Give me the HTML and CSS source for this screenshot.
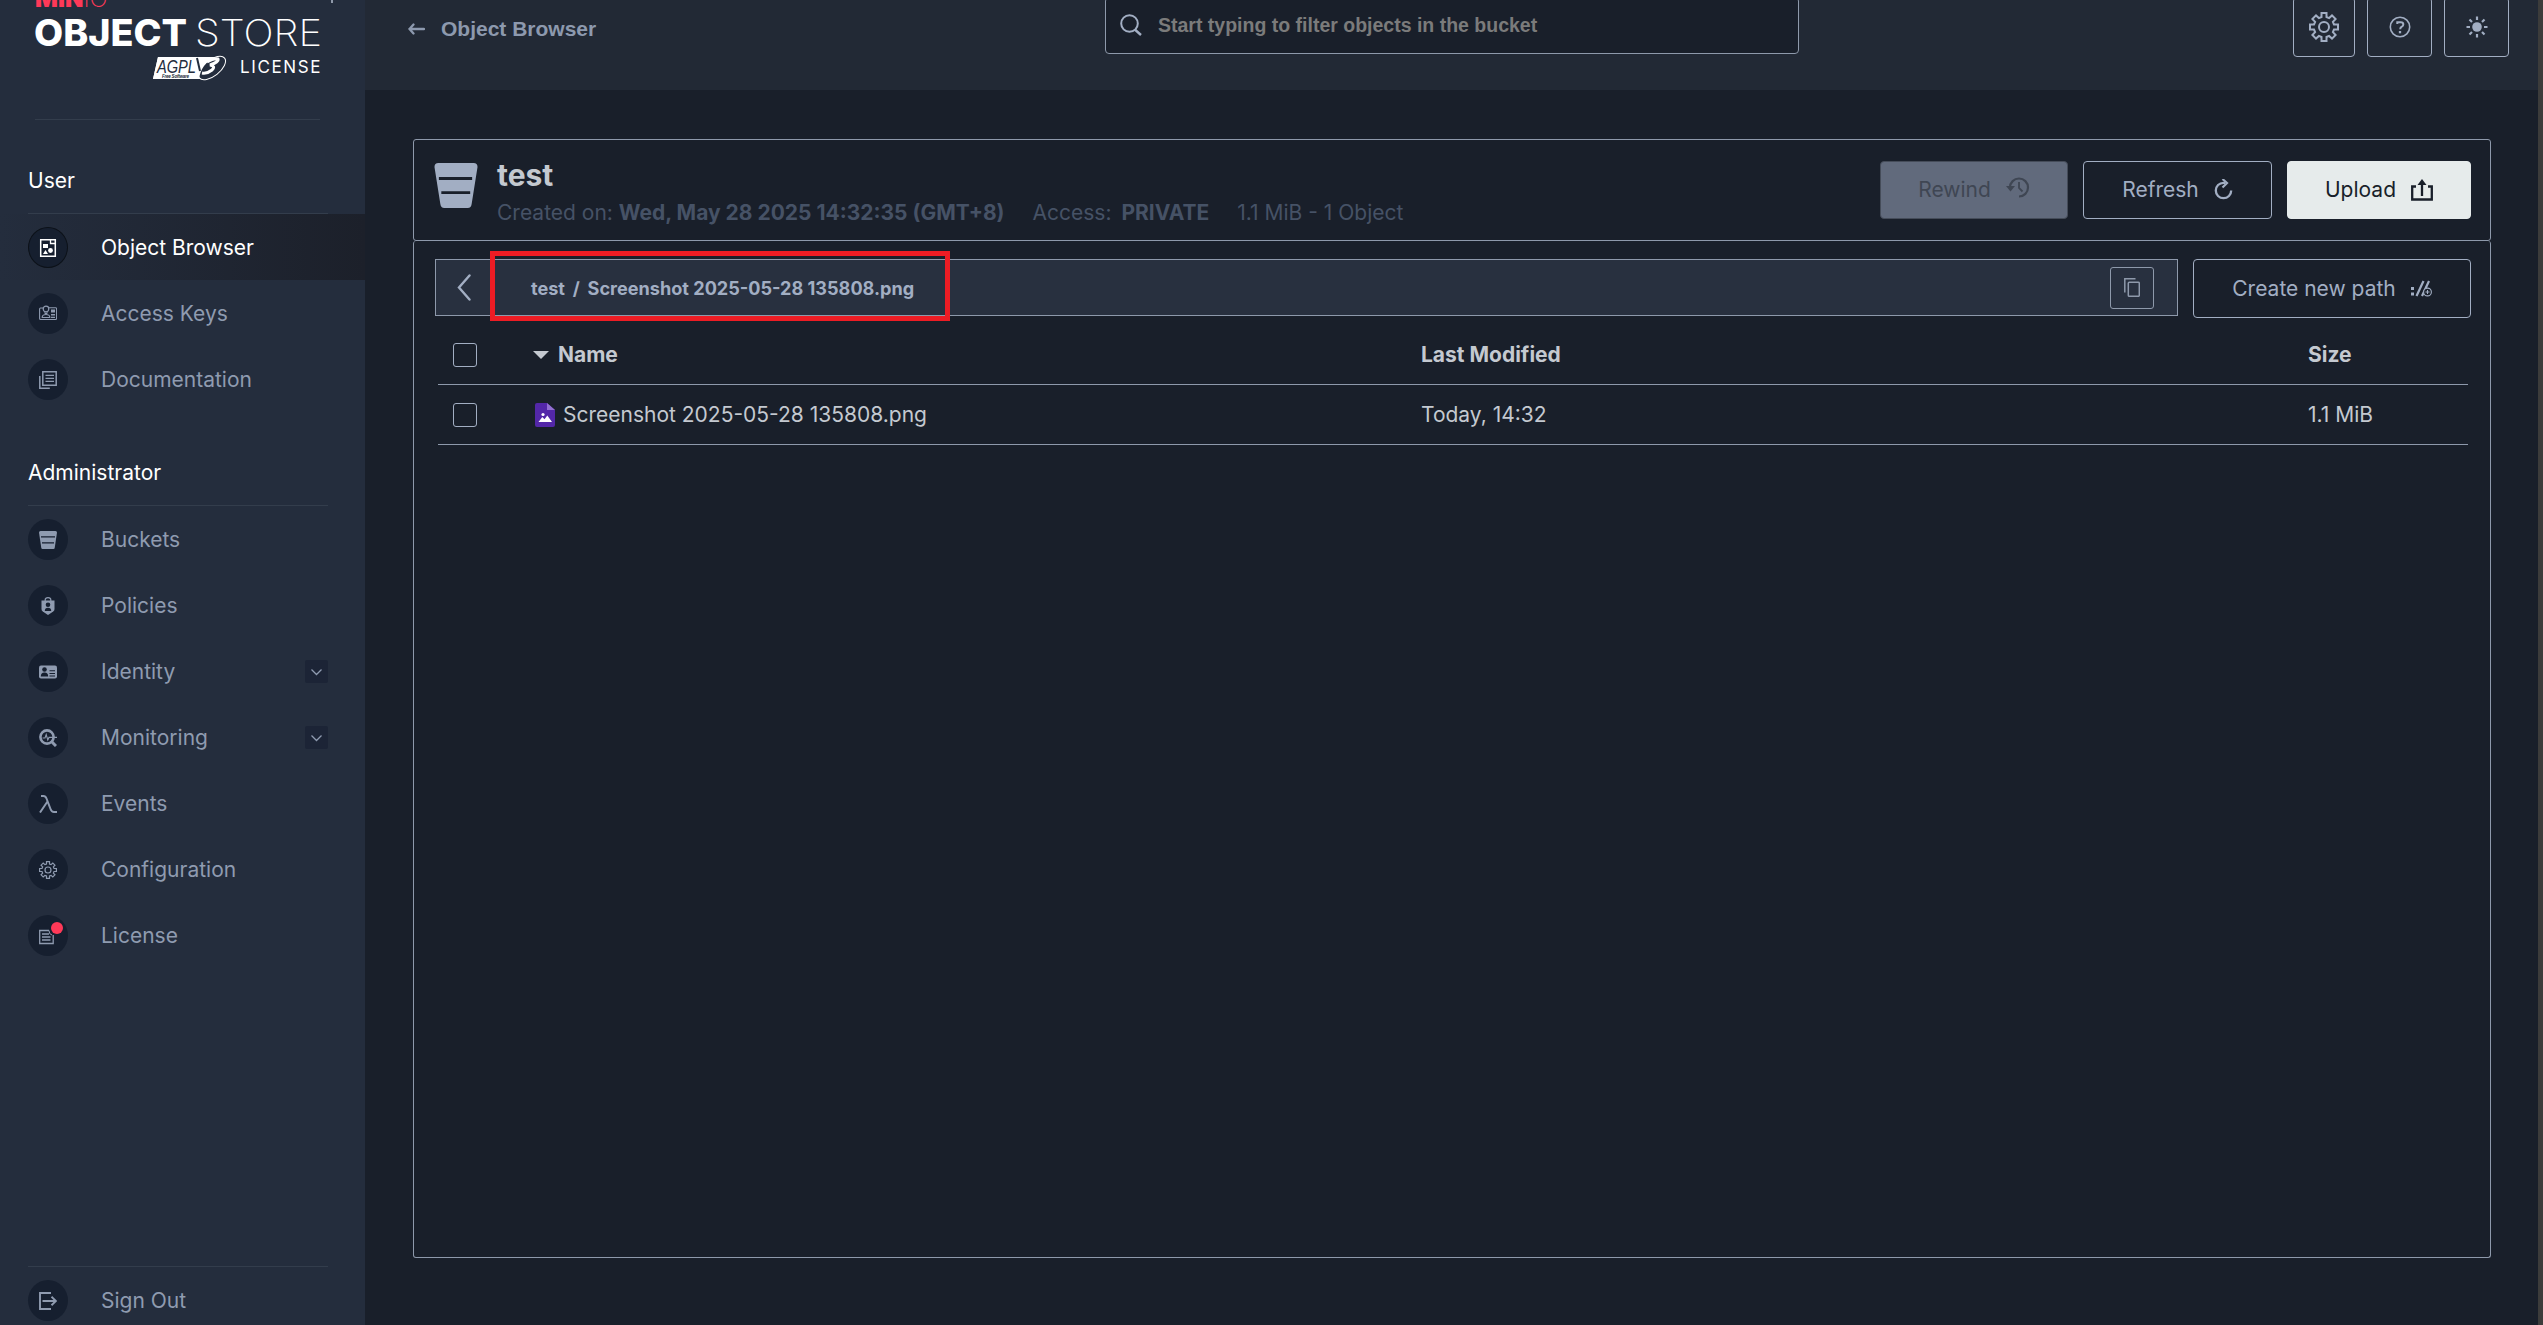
FILE: index.html
```
<!DOCTYPE html>
<html lang="en">
<head>
    <meta charset="UTF-8">
    <meta name="viewport" content="width=device-width, initial-scale=1.0">
    <title>MinIO Console</title>
    <link rel="stylesheet" href="styles.css">
</head>
<body>
    <div class="app">
        <aside class="sidebar">
            <div class="logo">
                <div class="logo-brand"><b>MIN</b>IO</div>
                <svg class="logo-name" width="285" height="30">
                    <text class="logo-bold" x="-1" y="28" textLength="153" lengthAdjust="spacingAndGlyphs">OBJECT</text>
                    <text class="logo-thin" x="160" y="28" textLength="127" lengthAdjust="spacingAndGlyphs">STORE</text>
                </svg>
                <div class="logo-license">
                    <svg width="74" height="26" viewBox="0 0 74 26">
                        <path d="M5 2H62L50 24H0Z" fill="#fff"/>
                        <ellipse cx="59" cy="13" rx="16" ry="8" transform="rotate(-38 59 13)" fill="#242d3d" stroke="#fff"/>
                        <path d="M5 2H62Q48 9 46 24H0Z" fill="#fff"/>
                        <text class="agpl" x="4" y="17.500" textLength="39" lengthAdjust="spacingAndGlyphs">AGPL</text>
                        <text class="agpl-sub" x="9" y="22.5" textLength="27">Free Software</text>
                        <path d="M44 3l3 13" stroke="#242d3d" stroke-width="2"/>
                        <path d="M54 7q7-4 11-3 1 3-8 6 6 1 2 5-5 4-10 3" fill="none" stroke="#fff" stroke-width="3"/>
                    </svg>
                    <span>LICENSE</span>
                </div>
                <span class="collapse"></span>
            </div>
            <nav class="menu">
                <h2>User</h2>
                <a class="item active">
                    <i><svg viewBox="0 0 18 18"><path d="M1.700.8h14.600v16.400H1.700z" fill="none" stroke="currentColor" stroke-width="1.500"/><path d="M11.500 1v3.500h4.500" fill="none" stroke="currentColor" stroke-width="1.300"/><path d="M4 5h5v4H4zM4 15l2.500-4L9 15z" fill="currentColor"/><circle cx="11.500" cy="11.500" r="2.400" fill="currentColor"/></svg></i>
                    Object Browser
                </a>
                <a class="item">
                    <i><svg viewBox="0 0 18 18"><path d="M4 3H1.500Q.6 3 .6 4v9.500q0 1 1 1h15q1 0 1-1V3.600q0-.8-1-.8H10" fill="none" stroke="currentColor" stroke-width="1.100"/><circle cx="7" cy="4" r="2.800" fill="none" stroke="currentColor" stroke-width="1.200"/><path d="M5.500 7.500L7 9l1.500-1.500M3.200 12.500q0-3 3.800-3t3.800 3z" fill="none" stroke="currentColor" stroke-width="1.200"/><path d="M12 4.500h4v3h-4zM12 9h4v1.400h-4zM12 11.700h4V13h-4z" fill="currentColor"/></svg></i>
                    Access Keys
                </a>
                <a class="item">
                    <i><svg viewBox="0 0 18 18"><path d="M3.800.8h13.400v13.400H3.800zM.8 5v12.200h10" fill="none" stroke="currentColor" stroke-width="1.500"/><path d="M6.500 4.300h8.500M6.500 7.300h8.500M6.500 10.300h8.500" stroke="currentColor" stroke-width="1.300"/></svg></i>
                    Documentation
                </a>
                <h2 class="admin">Administrator</h2>
                <a class="item">
                    <i><svg viewBox="0 0 18 18"><path d="M0 1.500Q0 0 1.500 0h15Q18 0 18 1.500L15.700 17q-.2 1-1.200 1h-11q-1 0-1.200-1z" fill="currentColor"/><path d="M2 5.800h14M3 11.800h12" stroke="#161f2f" stroke-width="1.300"/></svg></i>
                    Buckets
                </a>
                <a class="item">
                    <i><svg viewBox="0 0 18 18"><path d="M2.500 3.500h13V12q0 1.500-1.300 2.500L9 18l-5.200-3.500Q2.500 13.500 2.500 12z" fill="currentColor"/><path d="M6.200 4V2.700q0-2.100 2.800-2.100t2.800 2.100V4" fill="none" stroke="currentColor" stroke-width="1.200"/><circle cx="9" cy="7.700" r="2.300" fill="#161f2f"/><path d="M5.800 14q0-3.300 3.200-3.300t3.200 3.300z" fill="#161f2f"/></svg></i>
                    Policies
                </a>
                <a class="item">
                    <i><svg viewBox="0 0 18 18"><rect y="2.500" width="18" height="13" rx="2" fill="currentColor"/><circle cx="5.500" cy="6.500" r="2.300" fill="#161f2f"/><path d="M1.800 13.500q0-4 3.700-4t3.700 4zM10.500 7.200H16v1h-5.500zM10.500 10H16v1h-5.500zM10.500 12.600H16v1h-5.500z" fill="#161f2f"/></svg></i>
                    Identity
                    <svg class="chevron" viewBox="0 0 23 23"><path d="M6.500 9.500l5 5 5-5" fill="none" stroke="currentColor" stroke-width="1.300"/></svg>
                </a>
                <a class="item">
                    <i><svg viewBox="0 0 18 18"><circle cx="8" cy="8" r="6.600" fill="none" stroke="currentColor" stroke-width="2.600"/><path d="M12 12l5 5" stroke="currentColor" stroke-width="3"/><path d="M3.500 9H6l1.200-3.500L8.800 11l1.200-2.600H18" fill="none" stroke="currentColor" stroke-width="1.100"/></svg></i>
                    Monitoring
                    <svg class="chevron" viewBox="0 0 23 23"><path d="M6.500 9.500l5 5 5-5" fill="none" stroke="currentColor" stroke-width="1.300"/></svg>
                </a>
                <a class="item">
                    <i><svg viewBox="0 0 18 18"><path d="M2 1h2.500q2 0 3 2.500l4 10.500q1 3 3.500 3H18M8.500 6.500L1 17.500" fill="none" stroke="currentColor" stroke-width="2"/></svg></i>
                    Events
                </a>
                <a class="item">
                    <i><svg viewBox="0 0 30 30"><use href="#gear"/></svg></i>
                    Configuration
                </a>
                <a class="item">
                    <i><svg viewBox="0 0 18 18"><path d="M10 3.500H.7v13h13.500V8" fill="none" stroke="currentColor" stroke-width="1.300"/><path d="M3 7h7M3 10h8.500M3 13h8.500" stroke="currentColor" stroke-width="1.300"/><path d="M10 3.500q0 4 3 4.500" fill="none" stroke="currentColor"/></svg><em class="dot"></em></i>
                    License
                </a>
            </nav>
            <div class="menu signout">
                <a class="item">
                    <i><svg viewBox="0 0 18 18"><path d="M12 1H1v16h11M3.500 9H17M12.500 4.800L17 9l-4.500 4.200" fill="none" stroke="currentColor" stroke-width="1.900"/></svg></i>
                    Sign Out
                </a>
            </div>
        </aside>

        <div class="content">
            <header class="topbar">
                <a class="back">
                    <svg width="17" height="12" viewBox="0 0 17 12"><path d="M16 6H1.500M5.500 1.500L1.500 6l4 4.500" fill="none" stroke="currentColor" stroke-width="2.300" stroke-linecap="round"/></svg>
                    Object Browser
                </a>
                <div class="search">
                    <svg width="22" height="22" viewBox="0 0 22 22"><circle cx="9.500" cy="9.500" r="8.300" fill="none" stroke="currentColor" stroke-width="2"/><path d="M14.800 15.500L21 21" stroke="currentColor" stroke-width="2.400"/></svg>
                    <span>Start typing to filter objects in the bucket</span>
                </div>
                <div class="tools">
                    <button class="tool settings">
                        <svg width="30" height="30" viewBox="0 0 30 30">
                            <g id="gear" fill="none" stroke="currentColor" stroke-width="2">
                                <path d="M12.500 1h5v4l2.600 1.100L23 3.400 26.600 7l-2.700 2.900L25 12.500h4v5h-4l-1.100 2.600 2.700 2.900-3.600 3.600-2.900-2.700L17.500 25v4h-5v-4l-2.600-1.100L7 26.600 3.400 23l2.700-2.900L5 17.500H1v-5h4l1.100-2.600L3.400 7 7 3.400l2.900 2.700L12.500 5z"/>
                                <circle cx="15" cy="15" r="5"/>
                            </g>
                        </svg>
                    </button>
                    <button class="tool">
                        <svg width="22" height="22" viewBox="0 0 22 22" fill="none" stroke="currentColor"><circle cx="11" cy="11" r="9.700" stroke-width="1.600"/><path d="M8.300 8V6.300h3.500q2.500 0 2.500 2.200 0 1.500-1.500 2.200-1.600.6-1.600 2.600" stroke-width="2"/><path d="M11 15v2.300" stroke-width="2.300"/></svg>
                    </button>
                    <button class="tool">
                        <svg width="22" height="22" viewBox="0 0 22 22"><circle cx="11" cy="11" r="4.800" fill="currentColor"/><path d="M11 .5v3.500M11 18v3.500M.5 11H4M18 11h3.500M3.500 3.500L6 6M16 16l2.500 2.500M18.500 3.500L16 6M6 16l-2.500 2.500" stroke="currentColor" stroke-width="2.200"/></svg>
                    </button>
                </div>
            </header>

            <main class="panel">
                <section class="bucket-header">
                    <svg class="bucket-icon" width="44" height="45" viewBox="0 0 44 46"><path d="M0 4Q0 0 4 0h36q4 0 4 4l-6 38q-.5 4-4 4H10q-3.500 0-4-4z" fill="#a2aec3"/><path d="M4.500 15.800h34M7 30.300h29.500" stroke="#191f2a" stroke-width="3"/></svg>
                    <div class="bucket-info">
                        <h1>test</h1>
                        <p>
                            <span>Created on: <b>Wed, May 28 2025 14:32:35 (GMT+8)</b></span>
                            <span>Access: <b class="access">PRIVATE</b></span>
                            <span>1.1 MiB - 1 Object</span>
                        </p>
                    </div>
                    <div class="actions">
                        <button class="btn rewind">Rewind
                            <svg width="24" height="21" viewBox="0 0 24 21"><path d="M4 10.500a9 9 0 1 1 9 9" fill="none" stroke="currentColor" stroke-width="2.200"/><path d="M0 9h9l-4.500 5.500z" fill="currentColor"/><path d="M13 5v6l3.500 3.500" fill="none" stroke="currentColor" stroke-width="1.800"/></svg>
                        </button>
                        <button class="btn refresh">Refresh
                            <svg width="19" height="21" viewBox="0 0 19 21"><path d="M11 3.800H9.500a7.700 7.700 0 1 0 7.700 7.700" fill="none" stroke="currentColor" stroke-width="2.300"/><path d="M8.500 0l4.500 4-4.500 4.500" fill="none" stroke="currentColor" stroke-width="2.200"/></svg>
                        </button>
                        <button class="btn upload">Upload
                            <svg width="22" height="22" viewBox="0 0 22 22"><path d="M5 7.500H1.200v13h19.600v-13H17M11 17V3" fill="none" stroke="currentColor" stroke-width="2.300"/><path d="M6.500 6L11 0l4.500 6z" fill="currentColor"/></svg>
                        </button>
                    </div>
                </section>

                <section class="browser">
                    <div class="path-row">
                        <div class="breadcrumb">
                            <svg class="prev" width="14" height="27" viewBox="0 0 14 27"><path d="M12.500 1.500L2 13.500l10.500 12" fill="none" stroke="currentColor" stroke-width="2.400" stroke-linecap="round"/></svg>
                            <div class="crumbs">test <span>/</span> Screenshot 2025-05-28 135808.png</div>
                            <button class="copy">
                                <svg width="16" height="19" viewBox="0 0 16 19" fill="none" stroke="currentColor" stroke-width="1.500"><rect x="4.300" y="4.300" width="11" height="14" rx="1"/><path d="M.8 14.500V.8h10.700"/></svg>
                            </button>
                            <div class="highlight"></div>
                        </div>
                        <button class="btn new-path">Create new path
                            <svg width="21" height="17" viewBox="0 0 21 17"><path d="M0 7h3v3H0zM0 12.500h3v3H0z" fill="currentColor"/><path d="M5.500 16L12.500 1M11 16L18 1" stroke="currentColor" stroke-width="2.200"/><circle cx="16.500" cy="12" r="3.900" fill="#191f2a" stroke="currentColor" stroke-width="1.100"/><path d="M14.500 12h4M16.500 10v4" stroke="currentColor" stroke-width="1.100"/></svg>
                        </button>
                    </div>
                    <div class="table">
                        <div class="row head">
                            <span class="check"></span>
                            <span class="name"><span class="sort"></span>Name</span>
                            <span>Last Modified</span>
                            <span>Size</span>
                        </div>
                        <div class="row">
                            <span class="check"></span>
                            <span class="name">
                                <svg width="20" height="24" viewBox="0 0 20 24"><path d="M2 0h10l8 7v15q0 2-2 2H2q-2 0-2-2V2q0-2 2-2z" fill="#5327a8"/><path d="M12 0l8 7h-8z" fill="#9370d2"/><path d="M3.500 19l3.800-5 2.200 2.300 2.800-3.800 4.700 6.500z" fill="#fff"/><circle cx="8" cy="11.500" r="1.600" fill="#fff"/></svg>
                                Screenshot 2025-05-28 135808.png
                            </span>
                            <span>Today, 14:32</span>
                            <span>1.1 MiB</span>
                        </div>
                    </div>
                </section>
            </main>
        </div>
        <div class="edge"></div>
    </div>
</body>
</html>
```
FILE: styles.css
```
*{
    box-sizing: border-box;
}
body{
    margin: 0;
    background-color: #191f2a;
    color: #c4c9d0;
    font-family: Inter, "Liberation Sans", sans-serif;
    font-size: 21px;
    overflow: hidden;
}
button{
    font-family: inherit;
    font-size: 21px;
    background: none;
    padding: 0;
}
svg{
    flex-shrink: 0;
    display: block;
}
.app{
    display: flex;
    height: 1325px;
    overflow: hidden;
}

/* sidebar */
.sidebar{
    width: 365px;
    flex-shrink: 0;
    display: flex;
    flex-direction: column;
    background-color: #242d3d;
}
.logo{
    position: relative;
    height: 120px;
    margin: 0 45px 0 35px;
    border-bottom: 1px solid #333d4c;
}
.logo-brand{
    height: 18px;
    margin-top: -10px;
    font-size: 24px;
    line-height: 18px;
    color: #ff3958;
    font-weight: 200;
}
.logo-brand b{
    font-weight: 900;
}
.logo-name{
    margin-top: 10px;
    overflow: visible;
}
.logo-name text{
    font-family: Inter, sans-serif;
    font-size: 37px;
    fill: #fff;
}
.logo-name .logo-bold{
    font-weight: 800;
}
.logo-name .logo-thin{
    font-weight: 200;
}
.logo-license{
    display: flex;
    justify-content: flex-end;
    align-items: center;
    gap: 13px;
    margin-top: 7px;
    height: 26px;
    color: #fff;
    font-size: 17px;
    letter-spacing: 1.6px;
}
.logo-license span{
    margin: -2px -2px 0 0;
}
.agpl{
    font-family: "Liberation Sans", sans-serif;
    font-size: 19px;
    font-style: italic;
    letter-spacing: 0;
    fill: #242d3d;
}
.agpl-sub{
    font-family: "Liberation Sans", sans-serif;
    font-size: 4.5px;
    font-weight: bold;
    font-style: italic;
    letter-spacing: 0;
    fill: #242d3d;
}
.collapse{
    position: absolute;
    left: 296px;
    top: 0;
    width: 2px;
    height: 3px;
    background-color: #8f99aa;
}
.menu h2{
    height: 94px;
    margin: 0 37px 0 28px;
    padding-top: 47px;
    border-bottom: 1px solid #333d4c;
    color: #fff;
    font-size: 21px;
    line-height: 27px;
    font-weight: 400;
}
.item{
    display: flex;
    align-items: center;
    height: 66px;
    padding: 1px 37px 0 28px;
    color: #8f9bb0;
}
.item.active{
    color: #fff;
    background: linear-gradient(90deg, #242d3d, #1c202a);
}
.item i{
    position: relative;
    display: flex;
    align-items: center;
    justify-content: center;
    width: 40px;
    height: 41px;
    margin-right: 33px;
    border-radius: 50%;
    background-color: #161f2f;
}
.item.active i{
    border: 1px solid #0c1118;
}
.item i svg{
    width: 18px;
    height: 18px;
}
.item .chevron{
    width: 23px;
    height: 23px;
    margin-left: auto;
    border-radius: 2px;
    background-color: #1c2436;
}
.dot{
    position: absolute;
    top: 7px;
    right: 5px;
    width: 12px;
    height: 12px;
    border-radius: 50%;
    background-color: #ff3958;
}
.signout{
    margin-top: auto;
    margin-bottom: -8px;
}
.signout::before{
    content: "";
    display: block;
    margin: 0 37px 0 28px;
    border-top: 1px solid #333d4c;
}

/* top bar */
.content{
    flex: 1;
    display: flex;
    flex-direction: column;
}
.topbar{
    display: flex;
    height: 90px;
    padding: 0 29px 0 43px;
    background-color: #222935;
}
.back{
    display: flex;
    align-items: center;
    gap: 16px;
    width: 697px;
    height: 57px;
    color: #8d99ae;
    font-family: "Liberation Sans", sans-serif;
    font-size: 21px;
    font-weight: 700;
}
.search{
    display: flex;
    align-items: center;
    gap: 16px;
    width: 694px;
    height: 57px;
    margin-top: -3px;
    padding: 0 14px;
    border: 1px solid #8e99ab;
    border-radius: 4px;
    background-color: #191f2a;
    color: #a2aec3;
}
.search svg{
    margin-top: -2px;
}
.search span{
    color: #7b7b7b;
    font-family: "Liberation Sans", sans-serif;
    font-size: 19.5px;
    font-weight: bold;
}
.tools{
    display: flex;
    gap: 12px;
    margin-left: auto;
}
.tool{
    display: flex;
    align-items: center;
    justify-content: center;
    width: 65px;
    height: 60px;
    margin-top: -3px;
    border: 1px solid #a2aec3;
    border-radius: 4px;
    color: #a2aec3;
}
.tool.settings{
    width: 62px;
}

/* bucket panel */
.panel{
    flex: 1;
    display: flex;
    flex-direction: column;
    margin: 49px 47px 67px 48px;
}
.bucket-header{
    display: flex;
    height: 102px;
    padding: 0 19px 0 20px;
    border: 1px solid #8e99ab;
    border-radius: 3px;
}
.bucket-icon{
    margin-top: 23px;
}
.bucket-info{
    margin: 15px 0 0 19px;
}
.bucket-info h1{
    margin: 0;
    font-size: 30px;
    line-height: 40px;
}
.bucket-info p{
    display: flex;
    gap: 28px;
    margin: 4px 0 0;
    line-height: 28px;
    color: #465266;
    white-space: nowrap;
}
.access{
    margin-left: 4px;
}
.actions{
    display: flex;
    gap: 15px;
    margin: 21px 0 0 auto;
}
.btn{
    display: flex;
    align-items: center;
    justify-content: center;
    gap: 15px;
    height: 58px;
    padding-bottom: 1px;
    border: 1px solid #a2aec3;
    border-radius: 4px;
    color: #a2aec3;
}
.btn.rewind{
    width: 188px;
    background-color: #616a7c;
    border-color: #454c59;
    color: #3f4653;
}
.btn.rewind svg{
    margin-top: -4px;
}
.btn.refresh{
    width: 189px;
}
.btn.upload{
    width: 184px;
    background-color: #e6ebeb;
    border-color: #e6ebeb;
    color: #191f2a;
}
.browser{
    flex: 1;
    padding: 18px 19px 0 21px;
    border: 1px solid #8e99ab;
    border-top: 0;
    border-radius: 3px;
}
.path-row{
    display: flex;
    gap: 15px;
    height: 59px;
}
.breadcrumb{
    position: relative;
    flex: 1;
    display: flex;
    align-items: center;
    height: 57px;
    padding: 0 23px 0 21px;
    border: 1px solid #8e99ab;
    background-color: #28303f;
    color: #a2aec3;
}
.crumbs{
    margin-left: 60px;
    font-size: 18.1px;
    font-weight: 700;
}
.crumbs span{
    margin: 0 3.5px;
}
.copy{
    display: flex;
    align-items: center;
    justify-content: center;
    width: 44px;
    height: 42px;
    margin-left: auto;
    border: 1px solid #8e99ab;
    border-radius: 3px;
    color: #8e99ab;
}
.highlight{
    position: absolute;
    left: 54px;
    top: -9px;
    width: 460px;
    height: 70px;
    border: 5px solid #ed1c24;
}
.btn.new-path{
    width: 278px;
    height: 59px;
}
.table{
    margin: 7px 3px 0;
}
.row{
    display: grid;
    grid-template-columns: 80px 903px 887px 1fr;
    align-items: center;
    height: 60px;
    border-bottom: 1px solid #8e99ab;
}
.row.head{
    font-weight: 700;
}
.check{
    width: 24px;
    height: 24px;
    margin-left: 15px;
    border: 1px solid #a2aec3;
    border-radius: 3px;
}
.name{
    display: flex;
    align-items: center;
    gap: 8px;
    padding-left: 17px;
}
.head .name{
    gap: 9px;
    padding-left: 15px;
}
.sort{
    border: 8px solid transparent;
    border-top-color: #c4c9d0;
    border-bottom: 0;
}
.edge{
    width: 5px;
    flex-shrink: 0;
    background-color: #3c3c3b;
}
```
